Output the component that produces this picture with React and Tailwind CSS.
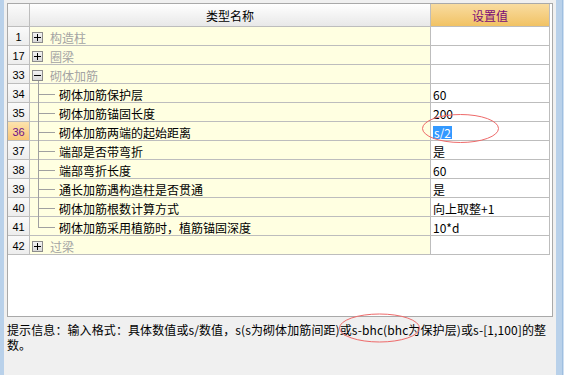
import React from "react";

const rows = [
  { n: 1, kind: "group", label: "构造柱" },
  { n: 17, kind: "group", label: "圈梁" },
  { n: 33, kind: "open", label: "砌体加筋" },
  { n: 34, kind: "child", label: "砌体加筋保护层", val: "60" },
  { n: 35, kind: "child", label: "砌体加筋锚固长度", val: "200" },
  { n: 36, kind: "child", label: "砌体加筋两端的起始距离", val: "s/2", sel: true },
  { n: 37, kind: "child", label: "端部是否带弯折", val: "是" },
  { n: 38, kind: "child", label: "端部弯折长度", val: "60" },
  { n: 39, kind: "child", label: "通长加筋遇构造柱是否贯通", val: "是" },
  { n: 40, kind: "child", label: "砌体加筋根数计算方式", val: "向上取整+1" },
  { n: 41, kind: "child", label: "砌体加筋采用植筋时，植筋锚固深度", val: "10*d", last: true },
  { n: 42, kind: "group", label: "过梁" },
];

function Box({ open }) {
  return (
    <svg width="11" height="11" viewBox="0 0 11 11" className="shrink-0 block">
      <defs>
        <linearGradient id={open ? "bo" : "bc"} x1="0" y1="0" x2="0" y2="1">
          <stop offset="0" stopColor="#f4f4f4" />
          <stop offset="1" stopColor="#d8d8d8" />
        </linearGradient>
      </defs>
      <rect x="0.5" y="0.5" width="10" height="10" fill={`url(#${open ? "bo" : "bc"})`} stroke="#8c8c8c" />
      <rect x="2" y="5" width="7" height="1" fill="#000" />
      {!open && <rect x="5" y="2" width="1" height="7" fill="#000" />}
    </svg>
  );
}

export default function App() {
  const cjk = "font-['Noto_Sans_CJK_SC','Noto_Sans_CJK_SC',sans-serif]";
  return (
    <div className={`relative w-[564px] h-[375px] bg-[#f0f0f0] flex overflow-hidden ${cjk} text-[12px] leading-[13px] text-black`}>
      <div className="w-[4px] shrink-0 bg-[#b9d1ea]" />
      <div className="w-[552px] shrink-0 flex flex-col pl-[3px] pr-[3px] pt-[3px]">
        <div className="h-[314px] border border-[#a9a9a9] bg-white">
          <div className="grid grid-cols-[22px_401px_119px]">
            {/* header */}
            <div className="h-[23px] border-r border-b border-[#bdbdbd] bg-gradient-to-b from-[#fbfbfb] to-[#e9e9e9]" />
            <div className="h-[23px] border-r border-b border-[#bdbdbd] bg-gradient-to-b from-[#ffffff] to-[#e8e8e8] flex items-center justify-center pt-[1px]">
              类型名称
            </div>
            <div className="h-[23px] border-r border-b border-[#bdbdbd] bg-gradient-to-b from-[#f9dc9f] to-[#f1c263] flex items-center justify-center pt-[1px] text-[#7a0a78]">
              设置值
            </div>
            {rows.map((r) => (
              <React.Fragment key={r.n}>
                <div
                  className={`h-[19px] border-r border-b border-[#bdbdbd] flex items-center justify-center pt-[2px] font-['Liberation_Sans',sans-serif] text-[11px] ${
                    r.sel
                      ? "bg-gradient-to-b from-[#fde3ad] to-[#f9c677] text-[#6e0f8a]"
                      : "bg-gradient-to-b from-[#fafafa] to-[#ededed] text-black"
                  }`}
                >
                  {r.n}
                </div>
                <div className="h-[19px] border-r border-b border-[#bdbdbd] bg-[#ffffe1] flex items-stretch">
                  {r.kind === "child" ? (
                    <div className="flex items-stretch pl-[8px]">
                      <div className="relative w-[17px] shrink-0">
                        <div className={`absolute left-0 top-[-1px] w-px bg-[#a0a0a0] ${r.last ? "h-[12px]" : "bottom-[-1px]"}`} />
                        <div className="absolute left-0 right-0 top-[10px] h-px bg-[#a0a0a0]" />
                      </div>
                      <div className="ml-[4px] flex items-center pt-[2px] whitespace-nowrap">{r.label}</div>
                    </div>
                  ) : (
                    <div className="relative flex items-center pl-[2px] pt-[2px]">
                      <Box open={r.kind === "open"} />
                      {r.kind === "open" && (
                        <div className="absolute left-[8px] top-[16px] bottom-[-1px] w-px bg-[#a0a0a0]" />
                      )}
                      <span className="ml-[7px] text-[#a3a3a3] whitespace-nowrap">{r.label}</span>
                    </div>
                  )}
                </div>
                <div className="h-[19px] border-r border-b border-[#bdbdbd] bg-white flex items-center pl-[2px] pt-[2px] whitespace-nowrap">
                  {r.val ? (
                    r.sel ? (
                      <span className="bg-[#3399ff] text-white px-[1px] leading-[13px]">{r.val}</span>
                    ) : (
                      r.val
                    )
                  ) : null}
                </div>
              </React.Fragment>
            ))}
          </div>
        </div>
        <div className="pt-[5px] whitespace-nowrap leading-[15px] tracking-[0.1px]">
          提示信息：输入格式：具体数值或s/数值，s(s为砌体加筋间距)或s-bhc(bhc为保护层)或s-[1,100]的整
          <br />
          数。
        </div>
      </div>
      <div className="w-[8px] shrink-0 flex">
        <div className="w-[6px] bg-[#b9d1ea]" />
        <div className="w-[1px] bg-[#9fbfe0]" />
        <div className="w-[1px] bg-[#cfe0f2]" />
      </div>
      <svg className="absolute left-0 top-0 pointer-events-none" width="564" height="375">
        <ellipse cx="460.5" cy="128.5" rx="38" ry="14" fill="none" stroke="#ee6a6a" strokeWidth="1" />
        <ellipse cx="379.5" cy="328" rx="40" ry="14" fill="none" stroke="#ee6a6a" strokeWidth="1" />
      </svg>
    </div>
  );
}
